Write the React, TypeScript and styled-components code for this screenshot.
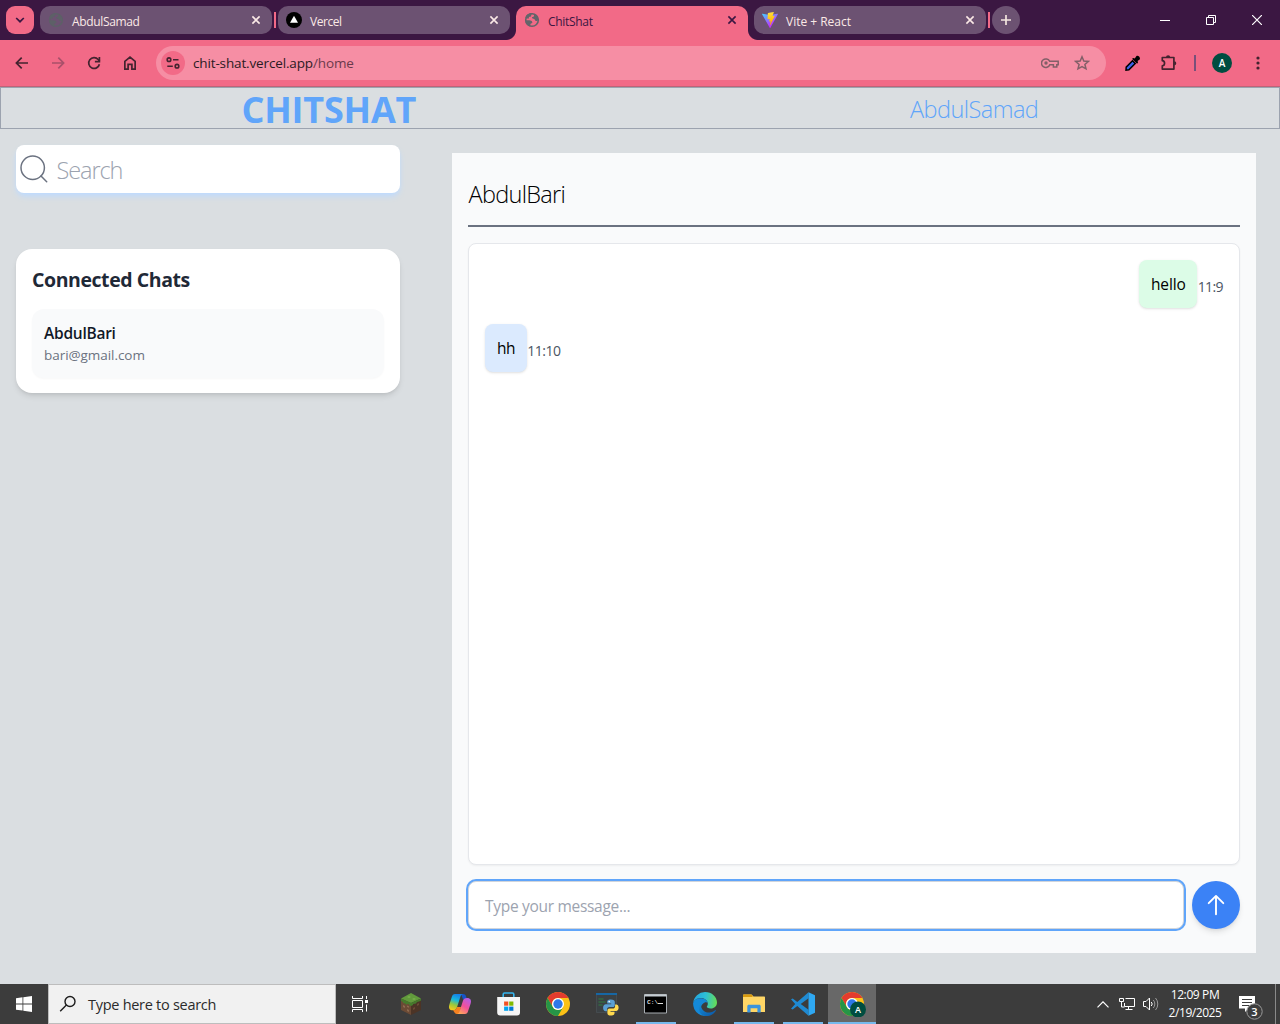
import React from "react";
import styled, { createGlobalStyle, css } from "styled-components";

const colors = {
  strip: "#3b1742",
  pink: "#f26a87",
  omnibox: "#f68ea4",
  tab: "#6c5272",
  page: "#dadee1",
  panel: "#f9fafb",
  blue: "#60a5fa",
  taskbar: "#3c3c3c",
};

const GlobalStyle = createGlobalStyle`
  *, *::before, *::after { box-sizing: border-box; }
  body {
    margin: 0;
    overflow: hidden;
    background: ${colors.page};
    font-family: "Open Sans", "Noto Sans", sans-serif;
  }
  svg { display: block; flex: none; }
`;

const Screen = styled.div`
  width: 1280px;
  height: 1024px;
  display: flex;
  flex-direction: column;
  background: ${colors.page};
`;

const Label = styled.span<{ $size: number; $spacing?: number; $weight?: number; $color?: string }>`
  display: block;
  white-space: nowrap;
  font-size: ${(p) => p.$size}px;
  letter-spacing: ${(p) => p.$spacing ?? 0}px;
  font-weight: ${(p) => p.$weight ?? 400};
  color: ${(p) => p.$color ?? "#000"};
`;

/* ---------- Browser chrome ---------- */

const TabStrip = styled.div`
  height: 40px;
  display: flex;
  align-items: flex-start;
  gap: 6px;
  padding: 6px 0 0 6px;
  background: ${colors.strip};
`;

const TabSearch = styled.div`
  width: 28px;
  height: 28px;
  border-radius: 9px;
  display: grid;
  place-items: center;
  background: ${colors.pink};
`;

const flare = css`
  content: "";
  position: absolute;
  bottom: 0;
  width: 10px;
  height: 10px;
`;

const Tab = styled.div<{ $active?: boolean; $separator?: boolean }>`
  position: relative;
  width: 232px;
  height: ${(p) => (p.$active ? 34 : 28)}px;
  padding: 0 10px 0 8px;
  display: flex;
  align-items: center;
  gap: 8px;
  border-radius: ${(p) => (p.$active ? "10px 10px 0 0" : "10px")};
  background: ${(p) => (p.$active ? colors.pink : colors.tab)};
  ${(p) =>
    p.$active &&
    css`
      padding-bottom: 6px;
      &::before {
        ${flare}
        left: -10px;
        background: radial-gradient(circle at 0 0, transparent 9.5px, ${colors.pink} 10.5px);
      }
      &::after {
        ${flare}
        right: -10px;
        background: radial-gradient(circle at 100% 0, transparent 9.5px, ${colors.pink} 10.5px);
      }
    `}
  ${(p) =>
    p.$separator &&
    css`
      &::after {
        content: "";
        position: absolute;
        right: -4px;
        top: 6px;
        width: 2px;
        height: 16px;
        background: ${colors.pink};
      }
    `}
`;

const TabTitle = styled(Label)`
  flex: 1;
  line-height: 16px;
  padding-top: 3px;
`;

const NewTab = styled(TabSearch)`
  border-radius: 50%;
  background: ${colors.tab};
`;

const WindowControls = styled.div`
  margin-left: auto;
  display: grid;
  grid-template-columns: repeat(3, 46px);
  height: 28px;
  place-items: center;
`;

const Toolbar = styled.div`
  height: 47px;
  display: flex;
  align-items: center;
  padding-left: 4px;
  background: ${colors.pink};
  border-bottom: 1px solid #bf6377;
`;

const ToolButton = styled.div`
  width: 36px;
  height: 36px;
  display: grid;
  place-items: center;
`;

const Omnibox = styled.div`
  width: 950px;
  height: 34px;
  margin: 0 9px 0 8px;
  padding: 0 8px 0 5px;
  border-radius: 17px;
  display: flex;
  align-items: center;
  background: ${colors.omnibox};
`;

const SiteInfo = styled.div`
  width: 24px;
  height: 24px;
  border-radius: 50%;
  display: grid;
  place-items: center;
  background: ${colors.pink};
`;

const Url = styled(Label)`
  flex: 1;
  margin-left: 8px;
  span {
    color: #6b3a4b;
  }
`;

const OmniIcon = styled.div`
  width: 32px;
  display: grid;
  place-items: center;
`;

const ToolDivider = styled.div`
  width: 2px;
  height: 16px;
  margin: 0 8px 0 7px;
  background: #79507a;
`;

const Avatar = styled.div`
  width: 20px;
  height: 20px;
  border-radius: 50%;
  display: grid;
  place-items: center;
  background: #004d40;
`;

/* ---------- Chat page ---------- */

const Header = styled.header`
  height: 42px;
  display: flex;
  align-items: center;
  padding-left: 240.5px;
  border: 1px solid #9ca3af;
`;

const Brand = styled(Label)`
  width: 668.5px;
  line-height: 40px;
  padding-top: 4px;
`;

const UserName = styled(Label)`
  line-height: 40px;
  padding-top: 2px;
`;

const Main = styled.main`
  flex: 1;
  display: flex;
  align-items: flex-start;
  padding: 16px 24px 0 16px;
`;

const Sidebar = styled.aside`
  width: 384px;
  margin-right: 52px;
  display: flex;
  flex-direction: column;
  gap: 56px;
`;

const SearchBox = styled.div`
  height: 48px;
  display: flex;
  align-items: center;
  gap: 4px;
  border-radius: 8px;
  background: #fff;
  box-shadow: 0 4px 6px -1px #bfdbfe, 0 2px 4px -2px #bfdbfe;
`;

const SearchPlaceholder = styled(Label)`
  padding: 1px 0 0 0.5px;
`;

const Card = styled.section`
  height: 144px;
  padding: 16px;
  border-radius: 16px;
  background: #fff;
  box-shadow: 0 4px 6px -1px rgba(0, 0, 0, 0.1), 0 2px 4px -2px rgba(0, 0, 0, 0.1);
`;

const CardTitle = styled(Label)`
  height: 28px;
  line-height: 29px;
  margin-bottom: 16px;
`;

const Contact = styled.div`
  height: 69px;
  padding: 12px;
  border-radius: 12px;
  background: ${colors.panel};
  box-shadow: 0 1px 2px rgba(0, 0, 0, 0.03);
`;

const ContactLine = styled(Label)<{ $h: number }>`
  line-height: ${(p) => p.$h}px;
`;

const Conversation = styled.section`
  width: 804px;
  height: 800px;
  margin-top: 8px;
  padding: 16px;
  display: flex;
  flex-direction: column;
  background: ${colors.panel};
`;

const PeerName = styled(Label)`
  height: 58px;
  line-height: 50px;
  padding-left: 0.5px;
  border-bottom: 2px solid #6b7280;
  margin-bottom: 16px;
`;

const Messages = styled.div`
  height: 622px;
  padding: 16px;
  display: flex;
  flex-direction: column;
  gap: 16px;
  border: 1px solid #e5e7eb;
  border-radius: 8px;
  background: #fff;
  box-shadow: 0 1px 2px rgba(0, 0, 0, 0.05);
`;

const MessageRow = styled.div<{ $own?: boolean }>`
  height: 48px;
  display: flex;
  align-items: center;
  justify-content: ${(p) => (p.$own ? "flex-end" : "flex-start")};
`;

const Bubble = styled.div<{ $own?: boolean; $w: number }>`
  width: ${(p) => p.$w}px;
  height: 48px;
  padding-left: 12px;
  display: flex;
  align-items: center;
  border-radius: 8px;
  background: ${(p) => (p.$own ? "#dcfce7" : "#dbeafe")};
  box-shadow: 0 1px 3px rgba(0, 0, 0, 0.1), 0 1px 2px -1px rgba(0, 0, 0, 0.1);
`;

const Time = styled(Label)`
  padding: 4px 0 0 0.3px;
`;

const Composer = styled.div`
  display: flex;
  gap: 8px;
  margin-top: 16px;
`;

const MessageField = styled.div`
  width: 716px;
  height: 48px;
  padding: 2px 16px 0;
  display: flex;
  align-items: center;
  border: 1px solid #d1d5db;
  border-radius: 8px;
  background: #fff;
  box-shadow: 0 0 0 2px ${colors.blue};
`;

const SendButton = styled.div`
  width: 48px;
  height: 48px;
  border-radius: 50%;
  display: grid;
  place-items: center;
  background: #3b82f6;
  box-shadow: 0 4px 6px -1px rgba(0, 0, 0, 0.1), 0 2px 4px -2px rgba(0, 0, 0, 0.1);
`;

/* ---------- Taskbar ---------- */

const Taskbar = styled.footer`
  height: 40px;
  display: flex;
  background: ${colors.taskbar};
`;

const TaskCell = styled.div<{ $w?: number }>`
  width: ${(p) => p.$w ?? 48}px;
  height: 40px;
  display: grid;
  place-items: center;
`;

const TaskSearch = styled.div`
  width: 288px;
  height: 40px;
  display: flex;
  align-items: center;
  gap: 11px;
  padding-left: 10px;
  background: #f1f1f1;
  border: 1px solid #bdbdbd;
`;

const Apps = styled.div`
  display: flex;
  gap: 1px;
  margin-left: 3px;
`;

const AppButton = styled(TaskCell)<{ $running?: boolean; $active?: boolean }>`
  background: ${(p) => (p.$active ? "#686868" : "transparent")};
  position: relative;
  &::after {
    content: "";
    display: ${(p) => (p.$running || p.$active ? "block" : "none")};
    position: absolute;
    bottom: 0;
    left: ${(p) => (p.$active ? 0 : 4)}px;
    right: ${(p) => (p.$active ? 0 : 4)}px;
    height: 2px;
    background: #76b9ed;
  }
`;

const Tray = styled.div`
  margin-left: auto;
  display: flex;
`;

const Clock = styled.div`
  width: 68px;
  display: flex;
  flex-direction: column;
  align-items: center;
  justify-content: center;
`;

const ClockLine = styled(Label)`
  line-height: 18px;
`;

const ShowDesktop = styled.div`
  width: 5px;
  border-left: 1px solid #8a8a8a;
`;

/* ---------- Drawings ---------- */

const Cross = ({ color }: { color: string }) => (
  <svg width="12" height="12" viewBox="0 0 12 12" stroke={color} strokeWidth="1.6">
    <path d="M2.4 2.4l7.2 7.2M9.600 2.4L2.4 9.600" />
  </svg>
);

const Globe = ({ color }: { color: string }) => (
  <svg width="16" height="16" viewBox="0 0 16 16">
    <circle cx="8" cy="8" r="6.300" fill="none" stroke={color} strokeWidth="1.600" />
    <path d="M9.500 1.400c-1.900.2-2.500 1.200-2.300 2.400.1.700-.8.900-1.600 1-.9.100-.8 1-.6 1.600H1.300C1.500 3.200 4 .9 8 .9z" fill={color} />
    <path d="M10 2.200v1.500c0 1-.9 1.100-1.600 1.300-.7.300-.4 1.300.3 1.500l1.500.5c.9.400.7 1.600 1.500 2 .9.400 2-.3 2.800-.9A6.600 6.600 0 0 0 10 2.200z" fill={color} />
    <path d="M1.300 8.300h3.900c1.600.1 2.800.7 3.100 1.900.2.800-.4 1.100-1.200 1.200-.8.200-.7 1.100-.7 1.800v1.300C3.300 13.900 1.400 11.500 1.300 8.300z" fill={color} />
  </svg>
);

const VercelMark = () => (
  <svg width="16" height="16" viewBox="0 0 16 16">
    <circle cx="8" cy="8" r="8" fill="#000" />
    <path d="M8 3.800l4 7H4z" fill="#fff" />
  </svg>
);

const ViteMark = () => (
  <svg width="16" height="16" viewBox="0 0 256 257">
    <defs>
      <linearGradient id="va" x1="0" x2=".58" y1="0" y2=".8">
        <stop offset="0" stopColor="#41d1ff" />
        <stop offset="1" stopColor="#bd34fe" />
      </linearGradient>
      <linearGradient id="vb" x1=".4" x2=".5" y1="0" y2=".9">
        <stop offset="0" stopColor="#ffea83" />
        <stop offset=".08" stopColor="#ffdd35" />
        <stop offset="1" stopColor="#ffa800" />
      </linearGradient>
    </defs>
    <path fill="url(#va)" d="M255.150 37.900 134.900 252.980c-2.500 4.400-8.900 4.500-11.400.1L.87 37.960c-2.700-4.800 1.400-10.600 6.800-9.600l120.400 21.500 117.800-21.500c5.400-1 9.600 4.800 6.900 9.600z" />
    <path fill="url(#vb)" d="M185.430.06 96.440 17.500a3.270 3.270 0 0 0-2.600 3l-5.500 92.500a3.270 3.270 0 0 0 4 3.400l24.800-5.700c2.300-.5 4.400 1.500 3.900 3.800l-7.400 36c-.5 2.500 1.800 4.500 4.100 3.800l15.300-4.600c2.400-.7 4.600 1.400 4.100 3.800l-11.700 56.600c-.7 3.600 4 5.500 6 2.500l72.500-148.600a3.270 3.270 0 0 0-3.500-4.700l-25.500 5a3.270 3.270 0 0 1-3.800-4.100L189.300 4.100a3.270 3.270 0 0 0-3.900-4.040z" />
  </svg>
);

const ink = "#43232f";

const BackArrow = ({ color, flip }: { color: string; flip?: boolean }) => (
  <svg width="14" height="14" viewBox="0 0 14 14" fill="none" stroke={color} strokeWidth="1.7">
    <path d={flip ? "M1 7h11M7.300 1.700L12.600 7l-5.300 5.300" : "M13 7H2M6.700 1.700L1.400 7l5.300 5.300"} />
  </svg>
);

const Reload = () => (
  <svg width="14" height="14" viewBox="0 0 14 14" fill="none" stroke={ink} strokeWidth="1.700">
    <path d="M12.400 8.200A5.400 5.400 0 1 1 11.200 3.500L12.600 5.200" />
    <path d="M12.400 1v4.600H7.900" />
  </svg>
);

const Home = () => (
  <svg width="14" height="16" viewBox="0 0 14 16" fill="none" stroke={ink} strokeWidth="1.700">
    <path d="M1.850 6.300L7 2.200l5.150 4.100v7.800H8.900V9.300H5.100v4.800H1.850z" />
  </svg>
);

const Tune = () => (
  <svg width="14" height="12" viewBox="0 0 14 12" fill="none" stroke={ink} strokeWidth="1.600">
    <circle cx="3" cy="2.700" r="1.800" />
    <path d="M7 2.700h5.500M1.300 9.200h5.500" />
    <circle cx="11" cy="9.200" r="1.800" />
  </svg>
);

const Key = () => (
  <svg width="18" height="12" viewBox="0 0 18 12" fill="none" stroke="#835f68" strokeWidth="1.500">
    <path d="M8.600 4.200h8.600v3.600h-1.400v2.100h-3.400V7.800H8.800A4.300 4.300 0 1 1 8.600 4.200z" />
    <circle cx="5" cy="6" r="1.700" fill="#835f68" stroke="none" />
  </svg>
);

const Star = () => (
  <svg width="16" height="16" viewBox="0 0 16 16" fill="none" stroke="#835f68" strokeWidth="1.500">
    <path d="M8 1.800l1.800 4.200 4.600.4-3.500 3 1.100 4.400L8 11.500l-4 2.300 1.100-4.400-3.500-3L6.200 6z" />
  </svg>
);

const Dropper = () => (
  <svg width="16" height="16" viewBox="0 0 16 16">
    <path d="M7.500 5.800l2.700 2.700-6.300 6.200-2.900.4.200-2.900z" fill="#3d62e8" stroke="#000" strokeWidth="1.500" />
    <path d="M7 3.800l1.500-.8 1.300.5 1.500-2.300c1.600-1.400 4.600 1.200 3.400 3.200l-2.200 1.700.6 1.200-1 1.500z" fill="#000" />
  </svg>
);

const Puzzle = () => (
  <svg width="18" height="18" viewBox="0 0 18 18">
    <path d="M2.300 3.500h11.600v11.600H2.300v-3.200c3-.4 3-4.800 0-5.200z" fill="none" stroke={ink} strokeWidth="1.700" strokeLinejoin="round" />
    <path d="M6 3.300a2.100 2.100 0 0 1 4.200 0zM14.200 7.200a2.100 2.100 0 0 1 0 4.200z" fill={ink} />
  </svg>
);

const Kebab = () => (
  <svg width="4" height="14" viewBox="0 0 4 14" fill={ink}>
    <circle cx="2" cy="2" r="1.600" />
    <circle cx="2" cy="7" r="1.600" />
    <circle cx="2" cy="12" r="1.600" />
  </svg>
);

const Magnifier = () => (
  <svg width="36" height="36" viewBox="0 0 36 36" fill="none" stroke="#6b7280" strokeWidth="1.500">
    <circle cx="16.700" cy="16.700" r="11.700" />
    <path d="M25 25l5.700 5.700" strokeLinecap="round" />
  </svg>
);

const SendArrow = () => (
  <svg width="20" height="22" viewBox="0 0 20 22" fill="none" stroke="#fff" strokeWidth="1.900" strokeLinecap="round" strokeLinejoin="round">
    <path d="M10 20.300V2M2.700 9.200L10 1.900l7.300 7.300" />
  </svg>
);

const WindowsLogo = () => (
  <svg width="16" height="16" viewBox="0 0 16 16" fill="#fff">
    <path d="M0 2.200L6.500 1.300v6.200H0zM7.300 1.200L16 0v7.500H7.300zM0 8.400h6.500v6.200L0 13.700zM7.300 8.400H16V16l-8.700-1.200z" />
  </svg>
);

const TaskMagnifier = () => (
  <svg width="18" height="18" viewBox="0 0 18 18" fill="none" stroke="#1c1c1c" strokeWidth="1.400">
    <circle cx="11" cy="6.500" r="5" />
    <path d="M7.400 10.100L1.200 16.300" />
  </svg>
);

const TaskView = () => (
  <svg width="18" height="16" viewBox="0 0 18 16" fill="none" stroke="#fff" strokeWidth="1">
    <path d="M1.500 0v2.500h10V0M1.500 16v-2.500h10V16M1.500 4.500h10v7h-10zM15.500 0v3M15.500 8.500V15.500" />
    <path d="M14 4h3v3h-3z" fill="#fff" stroke="none" />
  </svg>
);

const Minecraft = () => (
  <svg width="24" height="24" viewBox="0 0 24 24">
    <path d="M2 6.500l10 4.500v12L2 18z" fill="#6b4a35" />
    <path d="M22 6.500L12 11v12l10-5z" fill="#4c3426" />
    <path d="M12 1l10 5.500L12 11 2 6.500z" fill="#629a3c" />
    <path d="M2 6.500l10 4.500v3l-2-1v-1l-2 0v1l-2-1.500-2-.5v-1L2 9zM22 6.500L12 11v3l2-1v-1l3-.5 1-1.500 2-.5 2-1z" fill="#467a2c" />
    <path d="M4 13l2 1v2l-2-1zM8 17l2 1v2l-2-1zM8 13.500l2 .8v1.500l-2-.8z" fill="#8c6a4f" />
    <path d="M14 16l2-1v2l-2 1zM18 12l2-1v2l-2 1z" fill="#6b4a35" />
    <path d="M8 5l2-1 2 1-2 1zM13 7l2-1 2 1-2 1z" fill="#78b04c" />
  </svg>
);

const Copilot = () => (
  <svg width="24" height="24" viewBox="0 0 24 24">
    <defs>
      <linearGradient id="ca" x1=".5" x2=".2" y1="0" y2="1">
        <stop offset="0" stopColor="#1681e8" />
        <stop offset=".35" stopColor="#18b9dc" />
        <stop offset=".65" stopColor="#9bc83c" />
        <stop offset="1" stopColor="#ffca17" />
      </linearGradient>
      <linearGradient id="cb" x1=".8" x2=".2" y1="0" y2="1">
        <stop offset="0" stopColor="#b35ee8" />
        <stop offset=".5" stopColor="#f2509a" />
        <stop offset="1" stopColor="#ffac55" />
      </linearGradient>
    </defs>
    <path d="M13 2h2c2 0 2.800 1 3.300 3l.8 2.500h-4z" fill="#1653c9" />
    <path d="M7 2h8.200c-1.500 0-2.300 1-2.900 3L9.100 15c-.7 2.300-1.700 3.300-4 3.300-3.800 0-4.800-2.300-3.700-5.800l2.300-7.200C4.400 3.100 5.300 2 7 2z" fill="url(#ca)" />
    <path d="M5 18.300c2.300 0 3.300-1 4-3.300h4l-1.500 7H9c-2 0-2.400-1.500-4-3.700z" fill="#f58220" />
    <path d="M17 22H8.700c1.500 0 2.400-1 3-3l3.100-9.700c.7-2.300 1.800-3.300 4.200-3.300 3.600 0 4.700 2.300 3.600 5.800l-2.400 7C19.600 21 18.700 22 17 22z" fill="url(#cb)" />
  </svg>
);

const Store = () => (
  <svg width="24" height="24" viewBox="0 0 24 24">
    <path d="M6.200 6V2.300c0-.8.500-1.300 1.300-1.300h8c.8 0 1.300.5 1.300 1.300V6" fill="none" stroke="#35b5ee" strokeWidth="1.600" />
    <path d="M.2 5h22.800v15.500c0 2-1 3-3 3H3.200c-2 0-3-1-3-3z" fill="#f5f5f5" />
    <path d="M7.100 9.500h4.200v4.200H7.100z" fill="#f25022" />
    <path d="M12.200 9.500h4.200v4.200h-4.200z" fill="#7fba00" />
    <path d="M7.100 14.600h4.200v4.200H7.100z" fill="#00a4ef" />
    <path d="M12.200 14.600h4.200v4.200h-4.200z" fill="#0078d4" />
  </svg>
);

const ChromeArt = () => (
  <>
    <circle cx="12" cy="12" r="12" fill="#fbc116" />
    <path d="M1.610 6A12 12 0 0 1 22.390 6H12a6 6 0 0 0-5.200 9z" fill="#e33b2e" />
    <path d="M1.610 6A12 12 0 0 0 12 24l5.200-9A6 6 0 0 1 6.800 15z" fill="#269547" />
    <circle cx="12" cy="12" r="6" fill="#fff" />
    <circle cx="12" cy="12" r="4.700" fill="#2f78e8" />
  </>
);

const Chrome = () => (
  <svg width="24" height="24" viewBox="0 0 24 24">
    <ChromeArt />
  </svg>
);

const ChromeProfile = () => (
  <svg width="28" height="26" viewBox="-2 -1 28 26">
    <ChromeArt />
    <circle cx="18" cy="17.500" r="8" fill="#004d40" />
    <text x="18" y="21" textAnchor="middle" fontSize="9" fontWeight="600" fill="#fff">
      A
    </text>
  </svg>
);

const PythonIdle = () => (
  <svg width="24" height="24" viewBox="0 0 24 24">
    <path d="M1 1h21v20H1z" fill="#3b4144" />
    <path d="M1.500 3v17.500h20V3" fill="none" stroke="#4b5054" strokeWidth=".7" />
    <path d="M1 1h21v2H1z" fill="#1667a5" />
    <path d="M3.500 7h5M3.500 10h7M3.500 13h4" stroke="#356a42" strokeWidth="1.300" />
    <path d="M15.700 7.500c-3 0-3.500 1.200-3.500 2.500v1.600h4v.7H10.800c-1.500 0-2.700 1.200-2.700 3.500s1 3.500 2.500 3.500H12v-1.800c0-1.500 1-2.500 2.500-2.500h3.300c1.200 0 2-.9 2-2.100V10c0-1.500-1.200-2.500-4.100-2.500z" fill="#5a9fd4" />
    <path d="M16 23.600c3 0 3.500-1.200 3.500-2.500v-1.400h-4v-.7h5.600c1.500 0 2.500-1.200 2.500-3.200s-1-3.200-2.500-3.200h-1v1.700c0 1.500-1 2.300-2.400 2.300h-3.200c-1.200 0-2.100.9-2.100 2.100v2.500c0 1.500 1.200 2.400 3.600 2.400z" fill="#ffd94e" />
    <circle cx="14.200" cy="9.600" r=".8" fill="#fff" />
  </svg>
);

const Terminal = () => (
  <svg width="24" height="20" viewBox="0 0 24 20">
    <path d="M.5 .5h22v18.500H.5z" fill="#000" stroke="#a8adb2" />
    <path d="M.5 .5h22v2H.5z" fill="#c5ccd2" />
    <text x="3" y="9.800" fontFamily="Liberation Mono, monospace" fontWeight="700" fontSize="6.200" fill="#ddd">
      C:\
    </text>
    <path d="M14 9.500h5" stroke="#ddd" />
  </svg>
);

const Edge = () => (
  <svg width="24" height="24" viewBox="0 0 24 24">
    <defs>
      <linearGradient id="ea" x1="0" x2="1" y1=".4" y2=".5">
        <stop offset="0" stopColor="#22a5df" />
        <stop offset=".5" stopColor="#2dbfd6" />
        <stop offset="1" stopColor="#66dd55" />
      </linearGradient>
      <linearGradient id="eb" x1="0" x2="1" y1="0" y2="1">
        <stop offset="0" stopColor="#1592dd" />
        <stop offset="1" stopColor="#0b55a5" />
      </linearGradient>
    </defs>
    <path d="M.2 11A12 12 0 0 1 12 0c7 0 12 5 12 10.400 0 3.600-2.700 6-6.200 6-2.800 0-4.200-1-4-1.700.5-.7 1-1.400 1-2.900C14.800 8.500 11.500 6 8 6 3.900 6 1 8.200.2 11z" fill="url(#ea)" />
    <path d="M.1 11.300C.8 8 4 6.200 7.800 6.200c3.900 0 6.500 2.300 6.800 4.600-2-1.800-6.600 1-6.600 5.200 0 4.500 4.300 7.500 8.800 6.800A12 12 0 0 1 .1 11.300z" fill="#1489d8" />
    <path d="M9.500 9.500c-4 4 .5 11.800 7 11 2.300-.2 4.300-1.300 5.600-2.300.5-.3 1 .1.600.7C19.500 23.700 14 24.800 10.500 23.600 4.200 20.900 4.600 11.800 9.500 9.500z" fill="url(#eb)" />
  </svg>
);

const Explorer = () => (
  <svg width="24" height="20" viewBox="0 0 24 20">
    <path d="M1 1.500c0-.6.400-1 1-1h7.500l2 2H22c.6 0 1 .4 1 1V18H1z" fill="#ffd666" />
    <path d="M1 3V1.500c0-.6.400-1 1-1h7.500l1.500 1.700L9.800 3z" fill="#d99a0e" />
    <path d="M5.300 18.500v-6.300c0-.9.600-1.500 1.500-1.500h10.400c.9 0 1.500.6 1.500 1.500v6.300h-3.300v-4.300H8.600v4.300z" fill="#3b94de" />
  </svg>
);

const VsCode = () => (
  <svg width="26" height="24" viewBox="0 0 26 24">
    <path d="M18.500.3L7.300 10 2.700 6.500 1 7.300l4.200 4.700L1 16.700l1.700.8L7.300 14l11.200 9.700V17.800L10.700 12l7.800-5.800z" fill="#1f8ad2" />
    <path d="M18.500.3L25 3.300v17.400l-6.500 3z" fill="#2fa8f2" />
  </svg>
);

const Network = () => (
  <svg width="17" height="16" viewBox="0 0 17 16" fill="none" stroke="#fff" strokeWidth="1">
    <path d="M6.500 2.500h9v8h-10V7M9.500 10.500v3M6.500 13.500h7M.5 2.500h4v3h-4zM2.500 5.500v5.500h3" />
  </svg>
);

const Speaker = () => (
  <svg width="17" height="16" viewBox="0 0 17 16" fill="none" stroke="#fff" strokeWidth="1">
    <path d="M1.500 5.500H4l3.500-3.500v12L4 10.500H1.500zM9.300 6a3 3 0 0 1 0 4" />
    <path d="M11.300 4a6 6 0 0 1 0 8M13.500 2a9 9 0 0 1 0 12" stroke="#9a9a9a" />
  </svg>
);

const Notifications = () => (
  <svg width="26" height="32" viewBox="0 0 26 32">
    <path d="M0 8h16v12.500H9.500L6 24v-3.500H0z" fill="#fff" />
    <path d="M3 11.500h10M3 14.500h10M3 17.500h7" stroke="#3c3c3c" />
    <circle cx="15.500" cy="23.500" r="7.700" fill="#3c3c3c" stroke="#9a9a9a" />
    <text x="15.500" y="27.500" textAnchor="middle" fontSize="11" fontWeight="600" fill="#fff">
      3
    </text>
  </svg>
);

const tabs = [
  { title: "AbdulSamad", spacing: -0.35, icon: <Globe color="#5d6067" />, separator: true },
  { title: "Vercel", spacing: -0.45, icon: <VercelMark /> },
  { title: "ChitShat", spacing: -0.3, icon: <Globe color="#64646a" />, active: true },
  { title: "Vite + React", spacing: -0.02, icon: <ViteMark />, separator: true },
];

const apps: { icon: React.ReactNode; running?: boolean; active?: boolean }[] = [
  { icon: <Minecraft /> },
  { icon: <Copilot /> },
  { icon: <Store /> },
  { icon: <Chrome /> },
  { icon: <PythonIdle /> },
  { icon: <Terminal />, running: true },
  { icon: <Edge /> },
  { icon: <Explorer />, running: true },
  { icon: <VsCode />, running: true },
  { icon: <ChromeProfile />, active: true },
];

export default function App() {
  return (
    <Screen>
      <GlobalStyle />
      <TabStrip>
        <TabSearch>
          <svg width="10" height="8" viewBox="0 0 10 8" fill="none" stroke={colors.strip} strokeWidth="1.700">
            <path d="M1.200 2L5 5.700 8.800 2" />
          </svg>
        </TabSearch>
        {tabs.map((t) => (
          <Tab key={t.title} $active={t.active} $separator={t.separator}>
            {t.icon}
            <TabTitle $size={12} $spacing={t.spacing} $color={t.active ? colors.strip : "#fbe9e6"}>
              {t.title}
            </TabTitle>
            <Cross color={t.active ? colors.strip : "#fbe9e6"} />
          </Tab>
        ))}
        <NewTab>
          <svg width="12" height="12" viewBox="0 0 12 12" stroke="#f3e6df" strokeWidth="1.700">
            <path d="M6 1v10M1 6h10" />
          </svg>
        </NewTab>
        <WindowControls>
          <svg width="10" height="10" viewBox="0 0 10 10" stroke="#fff">
            <path d="M0 5.500h10" />
          </svg>
          <svg width="10" height="10" viewBox="0 0 10 10" fill="none" stroke="#fff">
            <path d="M.5 2.500h7v7h-7zM2.500 2.500v-2h7v7h-2" />
          </svg>
          <svg width="10" height="10" viewBox="0 0 10 10" stroke="#fff" strokeWidth="1.200">
            <path d="M0 0l10 10M10 0L0 10" />
          </svg>
        </WindowControls>
      </TabStrip>
      <Toolbar>
        <ToolButton><BackArrow color={ink} /></ToolButton>
        <ToolButton><BackArrow color="#a9506a" flip /></ToolButton>
        <ToolButton><Reload /></ToolButton>
        <ToolButton><Home /></ToolButton>
        <Omnibox>
          <SiteInfo><Tune /></SiteInfo>
          <Url $size={13.5} $spacing={-0.14} $color="#2b1a22">
            chit-shat.vercel.app<span>/home</span>
          </Url>
          <OmniIcon><Key /></OmniIcon>
          <OmniIcon><Star /></OmniIcon>
        </Omnibox>
        <ToolButton><Dropper /></ToolButton>
        <ToolButton><Puzzle /></ToolButton>
        <ToolDivider />
        <ToolButton>
          <Avatar><Label $size={10} $weight={600} $color="#fff">A</Label></Avatar>
        </ToolButton>
        <ToolButton><Kebab /></ToolButton>
      </Toolbar>

      <Header>
        <Brand $size={36} $weight={700} $spacing={-0.2} $color={colors.blue}>CHITSHAT</Brand>
        <UserName $size={23.5} $weight={300} $spacing={-0.55} $color={colors.blue}>AbdulSamad</UserName>
      </Header>
      <Main>
        <Sidebar>
          <SearchBox>
            <Magnifier />
            <SearchPlaceholder $size={23.5} $weight={300} $spacing={-1.1} $color="#9ca3af">Search</SearchPlaceholder>
          </SearchBox>
          <Card>
            <CardTitle $size={19.5} $weight={700} $spacing={-0.43} $color="#1f2937">Connected Chats</CardTitle>
            <Contact>
              <ContactLine $h={25} $size={15.5} $weight={600} $spacing={-0.25} $color="#111827">AbdulBari</ContactLine>
              <ContactLine $h={18} $size={13.5} $spacing={-0.05} $color="#6b7280">bari@gmail.com</ContactLine>
            </Contact>
          </Card>
        </Sidebar>
        <Conversation>
          <PeerName $size={23.5} $weight={300} $spacing={-0.7}>AbdulBari</PeerName>
          <Messages>
            <MessageRow $own>
              <Bubble $own $w={58.5}><Label $size={15.5} $spacing={-0.1}>hello</Label></Bubble>
              <Time $size={14} $spacing={-0.6} $color="#4b5563">11:9</Time>
            </MessageRow>
            <MessageRow>
              <Bubble $w={42}><Label $size={15.5} $spacing={-0.4}>hh</Label></Bubble>
              <Time $size={14} $spacing={-0.5} $color="#4b5563">11:10</Time>
            </MessageRow>
          </Messages>
          <Composer>
            <MessageField>
              <Label $size={15.5} $spacing={-0.3} $color="#9ca3af">Type your message...</Label>
            </MessageField>
            <SendButton><SendArrow /></SendButton>
          </Composer>
        </Conversation>
      </Main>

      <Taskbar>
        <TaskCell><WindowsLogo /></TaskCell>
        <TaskSearch>
          <TaskMagnifier />
          <Label $size={14.5} $spacing={-0.28} $color="#2b2b2b">Type here to search</Label>
        </TaskSearch>
        <TaskCell><TaskView /></TaskCell>
        <Apps>
          {apps.map((a, i) => (
            <AppButton key={i} $running={a.running} $active={a.active}>{a.icon}</AppButton>
          ))}
        </Apps>
        <Tray>
          <TaskCell $w={24}>
            <svg width="12" height="7" viewBox="0 0 12 7" fill="none" stroke="#fff" strokeWidth="1.200">
              <path d="M.5 6.300L6 .8l5.500 5.500" />
            </svg>
          </TaskCell>
          <TaskCell $w={24}><Network /></TaskCell>
          <TaskCell $w={22}><Speaker /></TaskCell>
          <Clock>
            <ClockLine $size={12} $spacing={-0.38} $color="#fff">12:09 PM</ClockLine>
            <ClockLine $size={12} $spacing={-0.45} $color="#fff">2/19/2025</ClockLine>
          </Clock>
          <TaskCell $w={46}><Notifications /></TaskCell>
          <ShowDesktop />
        </Tray>
      </Taskbar>
    </Screen>
  );
}
